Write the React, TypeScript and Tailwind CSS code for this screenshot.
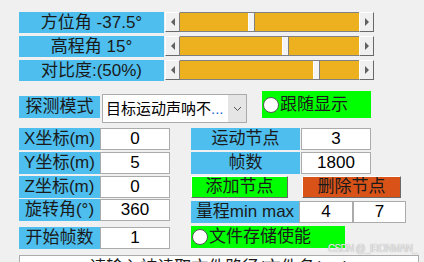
const FONT = { fontFamily: "'Liberation Sans', 'Noto Sans CJK SC', sans-serif" };

const Slider = ({ label, thumb }: { label: string; thumb: string }) => (
  <div className="flex items-start ml-[19px] gap-px">
    <div className="w-[145px] h-[21px] bg-[#4dbeee] text-[17px] leading-[21px] text-center text-[#1a1a1a]">{label}</div>
    <div className="flex w-[209px] h-[20px]">
      <div className="w-[15px] h-full bg-[#f0f0f0] border-t border-l border-white border-r border-b border-r-[#808080] border-b-[#696969] flex items-center justify-center">
        <div className="w-0 h-0 border-y-[4px] border-y-transparent border-r-[4px] border-r-[#606060]" />
      </div>
      <div className="flex-1 relative bg-[#edb120] border-y border-[#808080]">
        <div className={`absolute top-0 bottom-0 w-[7px] bg-[#f4f4f4] border-l border-white border-r border-r-[#808080] ${thumb}`} />
      </div>
      <div className="w-[15px] h-full bg-[#f0f0f0] border-t border-l border-white border-r border-b border-r-[#696969] border-b-[#696969] flex items-center justify-center">
        <div className="w-0 h-0 border-y-[4px] border-y-transparent border-l-[4px] border-l-[#606060]" />
      </div>
    </div>
  </div>
);

const Label = ({ text, w }: { text: string; w: string }) => (
  <div className={`${w} h-[22px] bg-[#4dbeee] text-[17px] leading-[22px] text-center text-[#1a1a1a] whitespace-nowrap overflow-hidden`}>{text}</div>
);

const Field = ({ value, w }: { value: string; w: string }) => (
  <div className={`${w} h-[22px] bg-white border border-[#ababab] text-[17px] leading-[20px] text-center text-black`}>{value}</div>
);

const Radio = () => <div className="w-[16px] h-[16px] rounded-full bg-white border border-[#555] shrink-0" />;

export default function App() {
  return (
    <div className="w-[424px] h-[262px] bg-[#f0f0f0] overflow-hidden relative" style={FONT}>
      <div className="pt-[12px] flex flex-col gap-[3px]">
        <Slider label="方位角 -37.5°" thumb="left-[68px]" />
        <Slider label="高程角 15°" thumb="left-[102px]" />
        <Slider label="对比度:(50%)" thumb="left-[133px]" />
      </div>

      <div className="flex items-start mt-[10px] ml-[19px] h-[32px]">
        <div className="mt-[5px]"><Label text="探测模式" w="w-[81px]" /></div>
        <div className="ml-[2px] mt-[3px] w-[145px] h-[29px] bg-white border border-[#ababab] flex">
          <div className="flex-1 pl-[3px] text-[15px] leading-[27px] text-black whitespace-nowrap overflow-hidden">
            目标运动声呐不<span className="text-[#1e6fd9]">...</span>
          </div>
          <div className="w-[18px] h-full bg-[#e5e5e5] flex items-center justify-center">
            <svg width="9" height="6" viewBox="0 0 9 6"><path d="M1 1l3.5 3.5L8 1" fill="none" stroke="#555" strokeWidth="1" /></svg>
          </div>
        </div>
        <div className="ml-[15px] w-[109px] h-[27px] bg-[#00ff00] flex items-center pl-[1px] gap-[1px] text-[17px] text-[#1a1a1a]">
          <Radio />
          <span>跟随显示</span>
        </div>
      </div>

      <div className="mt-[5px] ml-[19px] flex flex-col">
        <div className="flex h-[22px]">
          <Label text="X坐标(m)" w="w-[81px]" />
          <Field value="0" w="w-[70px]" />
          <div className="ml-[21px] flex gap-px">
            <Label text="运动节点" w="w-[109px]" />
            <Field value="3" w="w-[70px]" />
          </div>
        </div>
        <div className="flex h-[22px] mt-[2px]">
          <Label text="Y坐标(m)" w="w-[81px]" />
          <Field value="5" w="w-[70px]" />
          <div className="ml-[21px] flex gap-px">
            <Label text="帧数" w="w-[109px]" />
            <Field value="1800" w="w-[70px]" />
          </div>
        </div>
        <div className="flex h-[22px] mt-[2px]">
          <Label text="Z坐标(m)" w="w-[81px]" />
          <Field value="0" w="w-[70px]" />
          <div className="ml-[21px] flex">
            <div className="w-[97px] h-[22px] bg-[#00ff00] border border-t-white border-l-white border-r-[#696969] border-b-[#696969] text-[17px] leading-[20px] text-center text-[#1a1a1a]">添加节点</div>
            <div className="ml-[14px] w-[99px] h-[22px] bg-[#d95319] border border-t-white border-l-white border-r-[#696969] border-b-[#696969] text-[17px] leading-[20px] text-center text-[#1a1a1a]">删除节点</div>
          </div>
        </div>
        <div className="flex items-start h-[24px] mt-px">
          <Label text="旋转角(°)" w="w-[81px]" />
          <Field value="360" w="w-[70px]" />
          <div className="ml-[21px] mt-[2px] flex">
            <Label text="量程min max" w="w-[108px]" />
            <Field value="4" w="w-[54px]" />
            <Field value="7" w="w-[53px]" />
          </div>
        </div>
        <div className="flex items-start h-[22px] mt-[3px]">
          <div className="mt-px flex">
            <Label text="开始帧数" w="w-[81px]" />
            <Field value="1" w="w-[70px]" />
          </div>
          <div className="ml-[21px] w-[154px] h-[22px] bg-[#00ff00] flex items-center pl-[1px] gap-[1px] text-[17px] text-[#1a1a1a]">
            <Radio />
            <span>文件存储使能</span>
          </div>
        </div>
      </div>

      <div className="mt-[7px] ml-[19px] w-[400px] h-[30px] bg-white border border-[#ababab] text-[17px] leading-[24px] text-center text-[#1a1a1a] whitespace-nowrap overflow-hidden">
        请输入被读取文件路径/文件名(.txt)
      </div>

      <div className="absolute left-[328px] top-[241px] whitespace-nowrap text-[10px] tracking-[-0.7px] text-[#ececec] [text-shadow:0_0_1px_#8a8a8a]">CSDN @_IRONMAN_</div>
    </div>
  );
}
